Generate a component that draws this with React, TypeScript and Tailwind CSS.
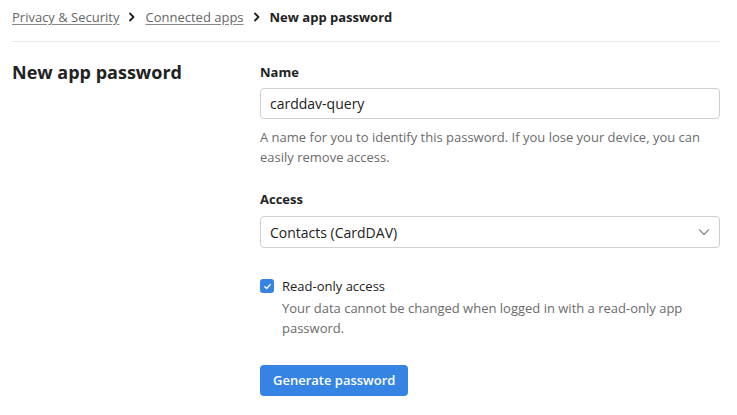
import { useState } from "react";

function Chevron() {
  return (
    <svg className="mx-[8px] h-[10px] w-[10px]" viewBox="0 0 10 10" fill="none">
      <path d="M3 1.5 6.5 5 3 8.5" stroke="#222" strokeWidth="1.8" strokeLinecap="round" strokeLinejoin="round" />
    </svg>
  );
}

export default function App() {
  const [name, setName] = useState("carddav-query");
  const [readOnly, setReadOnly] = useState(true);

  return (
    <div className="min-h-screen bg-white text-[#222] font-['Open_Sans',sans-serif]">
      <div className="w-[708px] ml-[12px]">
        {/* Breadcrumb */}
        <nav className="flex items-center pt-[7px] pb-[14px] text-[13px] leading-5 border-b border-[#e8e8e8]">
          <a href="#" className="text-[#666] underline underline-offset-2 decoration-[#888]">
            Privacy &amp; Security
          </a>
          <Chevron />
          <a href="#" className="text-[#666] underline underline-offset-2 decoration-[#888]">
            Connected apps
          </a>
          <Chevron />
          <span className="font-bold">New app password</span>
        </nav>

        <div className="flex mt-[20px]">
          <h1 className="w-[248px] shrink-0 text-[18px] leading-[22px] font-bold -mt-[1px]">New app password</h1>

          <form className="flex-1 flex flex-col" onSubmit={(e) => e.preventDefault()}>
            <label className="text-[13px] leading-5 font-bold">Name</label>
            <input
              value={name}
              onChange={(e) => setName(e.target.value)}
              className="mt-[6px] h-[31px] rounded-[4px] border border-[#cfcfcf] px-[9px] text-[14px] text-[#222] outline-none"
            />
            <p className="mt-[8px] text-[13px] leading-5 text-[#6b6b6b]">
              A name for you to identify this password. If you lose your device, you can easily remove access.
            </p>

            <label className="mt-[22px] text-[13px] leading-5 font-bold">Access</label>
            <div className="relative mt-[7px]">
              <select className="w-full h-[32px] appearance-none rounded-[4px] border border-[#cfcfcf] bg-white px-[9px] text-[14px] text-[#222] outline-none">
                <option>Contacts (CardDAV)</option>
                <option>Calendars (CalDAV)</option>
                <option>Mail (IMAP/SMTP)</option>
              </select>
              <svg
                className="pointer-events-none absolute right-[10px] top-[11px] h-[10px] w-[12px]"
                viewBox="0 0 12 10"
                fill="none"
              >
                <path d="M1.5 3 6 7.5 10.5 3" stroke="#888" strokeWidth="1.2" strokeLinecap="round" strokeLinejoin="round" />
              </svg>
            </div>

            <div className="mt-[28px] flex gap-[8px]">
              <button
                type="button"
                onClick={() => setReadOnly(!readOnly)}
                className={`mt-[3px] h-[14px] w-[14px] shrink-0 rounded-[3px] flex items-center justify-center ${
                  readOnly ? "bg-[#3584e4]" : "border border-[#bbb] bg-white"
                }`}
              >
                {readOnly && (
                  <svg viewBox="0 0 10 10" className="h-[9px] w-[9px]" fill="none">
                    <path d="M2 5.2 4.1 7.2 8 2.9" stroke="white" strokeWidth="1.6" strokeLinecap="round" strokeLinejoin="round" />
                  </svg>
                )}
              </button>
              <div>
                <div className="text-[13px] leading-5">Read-only access</div>
                <p className="mt-[2px] text-[13px] leading-5 text-[#6b6b6b]">
                  Your data cannot be changed when logged in with a read-only app password.
                </p>
              </div>
            </div>

            <div className="mt-[27px]">
              <button
                type="submit"
                className="h-[31px] px-[13px] rounded-[4px] bg-[#3584e4] text-white text-[13px] font-semibold"
              >
                Generate password
              </button>
            </div>
          </form>
        </div>
      </div>
    </div>
  );
}
